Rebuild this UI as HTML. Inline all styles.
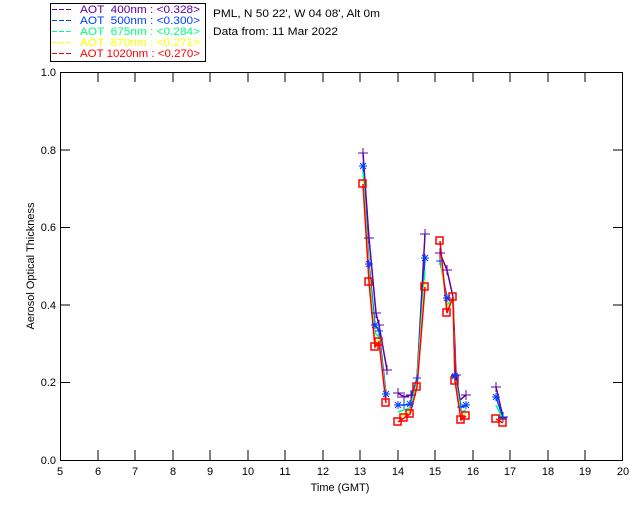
<!DOCTYPE html>
<html><head><style>
body{margin:0;background:#fff;width:640px;height:512px;overflow:hidden}
svg{display:block}
text{font-family:"Liberation Sans","DejaVu Sans",sans-serif;font-size:11px}
</style></head><body>
<svg width="640" height="512" viewBox="0 0 640 512">
<rect x="50.5" y="3.5" width="155" height="58" fill="none" stroke="#000"/>
<g stroke-dasharray="5 2">
<path d="M52 9.5h21" stroke="#6000a0"/><path d="M52 20.5h21" stroke="#0040ff"/><path d="M52 31.5h21" stroke="#00ff80"/><path d="M52 42.5h21" stroke="#ffff00"/><path d="M52 53.5h21" stroke="#ff0000"/>
</g>
<g>
<text x="80" y="13" fill="#6000a0" xml:space="preserve" textLength="120" lengthAdjust="spacingAndGlyphs">AOT  400nm : &lt;0.328&gt;</text>
<text x="80" y="24" fill="#0040ff" xml:space="preserve" textLength="120" lengthAdjust="spacingAndGlyphs">AOT  500nm : &lt;0.300&gt;</text>
<text x="80" y="35" fill="#00ff80" xml:space="preserve" textLength="120" lengthAdjust="spacingAndGlyphs">AOT  675nm : &lt;0.284&gt;</text>
<text x="80" y="46" fill="#ffff00" xml:space="preserve" textLength="120" lengthAdjust="spacingAndGlyphs">AOT  870nm : &lt;0.271&gt;</text>
<text x="80" y="57" fill="#ff0000" xml:space="preserve" textLength="120" lengthAdjust="spacingAndGlyphs">AOT 1020nm : &lt;0.270&gt;</text>
</g>
<text x="213" y="17" textLength="167" lengthAdjust="spacingAndGlyphs">PML, N 50 22', W 04 08', Alt 0m</text>
<text x="213" y="35" textLength="125" lengthAdjust="spacingAndGlyphs">Data from: 11 Mar 2022</text>
<rect x="60.5" y="72.5" width="562" height="388" fill="none" stroke="#000"/>
<g stroke="#000">
<path d="M98 72v10M135 72v10M173 72v10M210 72v10M248 72v10M285 72v10M323 72v10M360 72v10M398 72v10M435 72v10M473 72v10M510 72v10M548 72v10M585 72v10"/>
<path d="M98 460v-10M135 460v-10M173 460v-10M210 460v-10M248 460v-10M285 460v-10M323 460v-10M360 460v-10M398 460v-10M435 460v-10M473 460v-10M510 460v-10M548 460v-10M585 460v-10"/>
<path d="M60 382.5h10M60 305h10M60 227.5h10M60 150h10M613 382.5h10M613 305h10M613 227.5h10M613 150h10"/>
</g>
<g text-anchor="end">
<text x="56" y="464">0.0</text><text x="56" y="386">0.2</text><text x="56" y="309">0.4</text><text x="56" y="231">0.6</text><text x="56" y="154">0.8</text><text x="56" y="76">1.0</text>
</g>
<g text-anchor="middle">
<text x="60" y="475">5</text><text x="98" y="475">6</text><text x="135" y="475">7</text><text x="173" y="475">8</text><text x="210" y="475">9</text><text x="248" y="475">10</text><text x="285" y="475">11</text><text x="323" y="475">12</text><text x="360" y="475">13</text><text x="398" y="475">14</text><text x="435" y="475">15</text><text x="473" y="475">16</text><text x="510" y="475">17</text><text x="548" y="475">18</text><text x="585" y="475">19</text><text x="623" y="475">20</text>
<text x="340" y="491">Time (GMT)</text>
</g>
<text transform="translate(34 266) rotate(-90)" text-anchor="middle" font-size="10">Aerosol Optical Thickness</text>
<g fill="none" stroke-width="1.5">
<g stroke="#6000a0"><polyline points="363,153 369,238 376,313 379,325 387,370"/><polyline points="398,393 404,397 411,395 417,380 425,234"/><polyline points="440,253 447,270 453,297 456,375 460,400 466,395"/><polyline points="496,387 503,417"/></g>
<g stroke="#0040ff"><polyline points="363,166 369,264 375,325 379,331 386,394"/><polyline points="398,405 404,405 410,404 417,378 425,258"/><polyline points="440,261 447,298 453,302 455,376 461,407 466,405"/><polyline points="496,397 503,418"/></g>
<g stroke="#00ff80"><polyline points="363,172 369,270 375,333 379,337 386,398"/><polyline points="398,412 404,410 410,408 417,382 425,270"/><polyline points="440,257 447,305 453,298 455,378 461,412 466,410"/><polyline points="496,405 503,420"/></g>
<g stroke="#ffff00"><polyline points="363,180 369,278 375,343 379,340 386,401"/><polyline points="398,418 404,415 410,412 417,385 425,280"/><polyline points="440,250 447,310 453,297 455,380 461,417 466,414"/><polyline points="496,414 503,422"/></g>
<g stroke="#ff0000"><polyline points="363,184 369,282 375,347 379,342 386,403"/><polyline points="398,422 404,418 410,414 417,387 425,287"/><polyline points="440,241 447,313 453,297 455,381 461,420 466,416"/><polyline points="496,419 503,423"/></g>
</g>
<g fill="none" stroke="#ff0000" stroke-width="1.5">
<rect x="359" y="180" width="7" height="7"/><rect x="365" y="278" width="7" height="7"/><rect x="371" y="343" width="7" height="7"/><rect x="375" y="338" width="7" height="7"/><rect x="382" y="399" width="7" height="7"/><rect x="394" y="418" width="7" height="7"/><rect x="400" y="414" width="7" height="7"/><rect x="406" y="410" width="7" height="7"/><rect x="413" y="383" width="7" height="7"/><rect x="421" y="283" width="7" height="7"/><rect x="436" y="237" width="7" height="7"/><rect x="443" y="309" width="7" height="7"/><rect x="449" y="293" width="7" height="7"/><rect x="451" y="377" width="7" height="7"/><rect x="457" y="416" width="7" height="7"/><rect x="462" y="412" width="7" height="7"/><rect x="492" y="415" width="7" height="7"/><rect x="499" y="419" width="7" height="7"/>
</g>
<g stroke="#6000a0">
<path d="M363 148v10M358 153h10M369 233v10M364 238h10M376 308v10M371 313h10M379 320v10M374 325h10M387 365v10M382 370h10M398 388v10M393 393h10M404 392v10M399 397h10M411 390v10M406 395h10M425 229v10M420 234h10M440 248v10M435 253h10M447 265v10M442 270h10M456 370v10M451 375h10M466 390v10M461 395h10M496 382v10M491 387h10M503 412v10M498 417h10"/>
</g>
<g stroke="#0040ff">
<path d="M363 162v8M359 166h8M360 163l6 6M366 163l-6 6M369 260v8M365 264h8M366 261l6 6M372 261l-6 6M375 321v8M371 325h8M372 322l6 6M378 322l-6 6M379 327v8M375 331h8M386 390v8M382 394h8M383 391l6 6M389 391l-6 6M398 401v8M394 405h8M395 402l6 6M401 402l-6 6M404 401v8M400 405h8M410 400v8M406 404h8M407 401l6 6M413 401l-6 6M417 374v8M413 378h8M425 254v8M421 258h8M422 255l6 6M428 255l-6 6M440 257v8M436 261h8M447 294v8M443 298h8M444 295l6 6M450 295l-6 6M455 372v8M451 376h8M452 373l6 6M458 373l-6 6M461 403v8M457 407h8M466 401v8M462 405h8M463 402l6 6M469 402l-6 6M496 393v8M492 397h8M493 394l6 6M499 394l-6 6M503 414v8M499 418h8"/>
</g>
</svg>
</body></html>
